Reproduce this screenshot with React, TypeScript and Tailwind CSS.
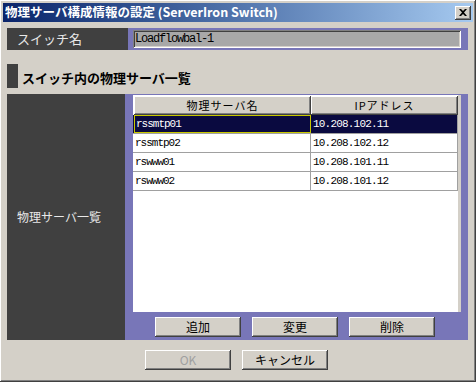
import React from "react";

const raised =
  "shadow-[inset_-1px_-1px_#404040,inset_1px_1px_#ffffff,inset_-2px_-2px_#808080,inset_2px_2px_#d4d0c8]";
const sunken =
  "shadow-[inset_1px_1px_#808080,inset_-1px_-1px_#ffffff,inset_2px_2px_#404040,inset_-2px_-2px_#d4d0c8]";

const jp = "font-['Noto_Sans_CJK_JP',sans-serif]";
const mono = "font-['Liberation_Mono','Noto_Sans_CJK_JP',monospace]";

const servers = [
  { name: "rssmtp01", ip: "10.208.102.11" },
  { name: "rssmtp02", ip: "10.208.102.12" },
  { name: "rswww01", ip: "10.208.101.11" },
  { name: "rswww02", ip: "10.208.101.12" },
];

const Button = ({ label, disabled }: { label: string; disabled?: boolean }) => (
  <button
    className={`h-[20px] w-[86px] bg-[#d4d0c8] text-[12px] leading-none ${jp} ${raised} ${
      disabled ? "text-[#a0a0a0]" : "text-black"
    }`}
  >
    {label}
  </button>
);

export default function App() {
  return (
    <div
      className={`w-[476px] h-[382px] bg-[#d4d0c8] flex flex-col p-[3px] ${raised}`}
    >
      {/* Title bar */}
      <div className="h-[19px] flex items-center justify-between pl-[2px] pr-[2px] bg-gradient-to-r from-[#0a246a] to-[#a6caf0]">
        <span className={`text-white font-bold text-[12.5px] leading-none ${jp}`}>
          物理サーバ構成情報の設定 (ServerIron Switch)
        </span>
        <div
          className={`w-[16px] h-[14px] bg-[#d4d0c8] flex items-center justify-center ${raised}`}
        >
          <svg width="8" height="7" viewBox="0 0 8 7">
            <path d="M0 0h2l2 2 2-2h2L5 3.5 8 7H6L4 5 2 7H0l3-3.5z" fill="#000" />
          </svg>
        </div>
      </div>

      <div className="flex flex-col pl-[4px] pr-[5px] pt-[6px]">
        {/* Switch name row */}
        <div className="flex h-[22px]">
          <div
            className={`w-[121px] bg-[#404040] text-[#e8e8e8] text-[13px] flex items-center pl-[10px] ${jp}`}
          >
            スイッチ名
          </div>
          <div className="flex-1 bg-[#7876b8] flex items-center pl-[5px] pr-[7px]">
            <div
              className={`flex-1 h-[18px] bg-[#a8a8a8] flex items-center pl-[2px] text-[12px] text-black ${mono} tracking-[-1.2px] ${sunken}`}
            >
              Loadflowbal-1
            </div>
          </div>
        </div>

        {/* Section header */}
        <div className="flex items-end h-[24px] mt-[14px] gap-[4px]">
          <div className="w-[11px] h-[24px] bg-[#404040]" />
          <span className={`font-bold text-[13px] leading-none pb-[4px] text-black ${jp}`}>
            スイッチ内の物理サーバ一覧
          </span>
        </div>

        {/* Main list area */}
        <div className="flex h-[246px] mt-[6px]">
          <div
            className={`w-[118px] bg-[#404040] text-[#e8e8e8] text-[12px] flex items-center pl-[10px] ${jp}`}
          >
            物理サーバ一覧
          </div>
          <div className="flex-1 bg-[#7876b8] flex flex-col pl-[8px] pr-[7px] pt-[1px] pb-[3px]">
            <div className="h-[217px] bg-white border-r-[3px] border-[#d4d0c8] flex flex-col">
              <div className="flex h-[20px] pl-[1px] pt-[1px]">
                <div
                  className={`w-[177px] bg-[#d4d0c8] flex items-center justify-center text-[11px] text-black tracking-[1px] ${jp} ${raised}`}
                >
                  物理サーバ名
                </div>
                <div
                  className={`w-[147px] bg-[#d4d0c8] flex items-center justify-center text-[11px] text-black tracking-[1px] ${jp} ${raised}`}
                >
                  IPアドレス
                </div>
              </div>
              {servers.map((s, i) => (
                <div
                  key={s.name}
                  className={`flex h-[19px] pl-[1px] border-b border-[#a0a0a0] ${
                    i === 0 ? "bg-[#0a0a40] text-white" : "text-black"
                  }`}
                >
                  <div
                    className={`w-[177px] flex items-center pl-[1px] text-[11px] tracking-[-1px] ${mono} ${
                      i === 0 ? "border border-[#c8c800]" : "border-r border-[#a0a0a0]"
                    }`}
                  >
                    {s.name}
                  </div>
                  <div
                    className={`w-[147px] flex items-center pl-[2px] text-[11px] tracking-[-0.8px] ${mono} border-r border-[#a0a0a0]`}
                  >
                    {s.ip}
                  </div>
                </div>
              ))}
            </div>
            <div className="flex gap-[11px] pl-[22px] mt-[5px]">
              <Button label="追加" />
              <Button label="変更" />
              <Button label="削除" />
            </div>
          </div>
        </div>

        {/* Bottom buttons */}
        <div className="flex gap-[11px] pl-[138px] mt-[10px]">
          <Button label="OK" disabled />
          <Button label="キャンセル" />
        </div>
      </div>
    </div>
  );
}
